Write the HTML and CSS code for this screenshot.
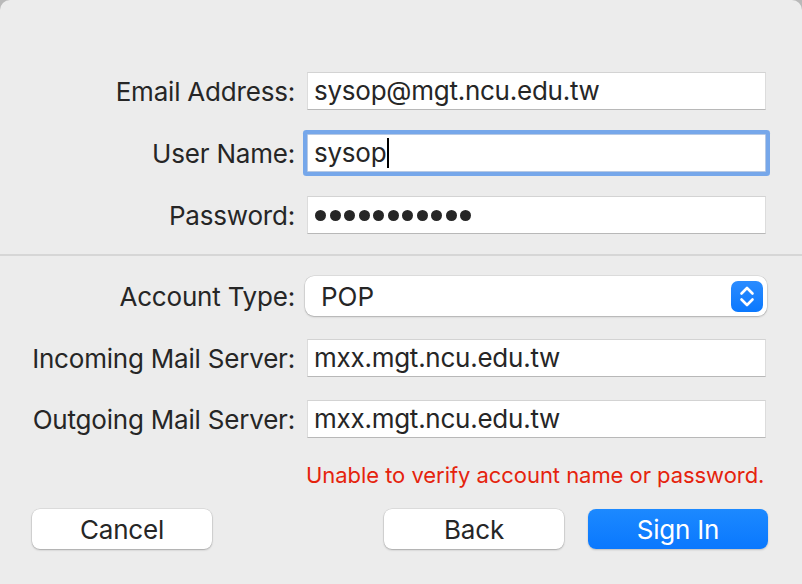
FILE: index.html
```html
<!DOCTYPE html>
<html>
<head>
<meta charset="utf-8">
<link rel="stylesheet" href="styles.css">
</head>
<body>
<div class="window">
  <div class="section">
    <div class="row">
      <div class="label">Email Address:</div>
      <div class="field">sysop@mgt.ncu.edu.tw</div>
    </div>
    <div class="row">
      <div class="label">User Name:</div>
      <div class="field focused">sysop<span class="caret"></span></div>
    </div>
    <div class="row">
      <div class="label">Password:</div>
      <div class="field dots"><span class="dot"></span><span class="dot"></span><span class="dot"></span><span class="dot"></span><span class="dot"></span><span class="dot"></span><span class="dot"></span><span class="dot"></span><span class="dot"></span><span class="dot"></span><span class="dot"></span></div>
    </div>
  </div>
  <div class="separator"></div>
  <div class="section lower">
    <div class="row popup-row">
      <div class="label">Account Type:</div>
      <div class="popup">
        <span class="popup-text">POP</span>
        <span class="stepper">
          <svg width="32" height="31" viewBox="0 0 32 31"><path d="M10.5 12.5 L16 7 L21.5 12.5 M10.5 18.5 L16 24 L21.5 18.5" fill="none" stroke="#fff" stroke-width="2.6" stroke-linecap="round" stroke-linejoin="round"/></svg>
        </span>
      </div>
    </div>
    <div class="row">
      <div class="label">Incoming Mail Server:</div>
      <div class="field">mxx.mgt.ncu.edu.tw</div>
    </div>
    <div class="row">
      <div class="label">Outgoing Mail Server:</div>
      <div class="field">mxx.mgt.ncu.edu.tw</div>
    </div>
  </div>
  <div class="error">Unable to verify account name or password.</div>
  <div class="buttons">
    <button class="btn cancel">Cancel</button>
    <div class="right-buttons">
      <button class="btn">Back</button>
      <button class="btn primary">Sign In</button>
    </div>
  </div>
</div>
</body>
</html>
```

FILE: styles.css
```css
html, body {
  margin: 0;
  padding: 0;
  background: #b9b9b9;
}
body {
  width: 802px;
  height: 584px;
  overflow: hidden;
  font-family: Inter, "Liberation Sans", sans-serif;
  color: #262626;
}
.window {
  width: 802px;
  height: 584px;
  background: #ececec;
  border-radius: 10px 10px 0 0;
  box-sizing: border-box;
  padding-top: 72px;
}
.section {
  display: flex;
  flex-direction: column;
  gap: 24px;
}
.section.lower {
  gap: 23px;
}
.row {
  display: flex;
  align-items: center;
  height: 38px;
}
.popup-row {
  height: 40px;
}
.label {
  width: 295px;
  text-align: right;
  font-size: 26px;
  letter-spacing: -0.2px;
  box-sizing: border-box;
  flex: none;
}
.field {
  width: 459px;
  height: 38px;
  margin-left: 12px;
  background: #fff;
  box-sizing: border-box;
  border-top: 1px solid #d3d3d3;
  border-left: 1px solid #dcdcdc;
  border-right: 1px solid #dcdcdc;
  border-bottom: 1px solid #b8b8b8;
  padding-left: 6px;
  font-size: 26px;
  letter-spacing: -0.25px;
  line-height: 36px;
  display: flex;
  align-items: center;
}
.focused {
  border: 1px solid #b7c9e4;
  box-shadow: 0 0 0 4px #76a7ea;
  border-radius: 1px;
}
.caret {
  display: inline-block;
  width: 2px;
  height: 30px;
  background: #000;
  margin-left: 1px;
}
.dots {
  gap: 3.5px;
  padding-left: 7px;
}
.dot {
  width: 11px;
  height: 11px;
  border-radius: 50%;
  background: #262626;
  flex: none;
}
.separator {
  height: 2px;
  background: #d6d6d6;
  margin: 20px 0 20px;
}
.popup {
  margin-left: 10px;
  width: 462px;
  height: 40px;
  background: #fff;
  border-radius: 9px;
  box-shadow: 0 0 0 0.5px rgba(0,0,0,0.12), 0 1px 2px rgba(0,0,0,0.22);
  display: flex;
  align-items: center;
  justify-content: space-between;
  box-sizing: border-box;
  padding: 0 4px 0 16px;
  font-size: 26px;
}
.stepper {
  width: 32px;
  height: 31px;
  border-radius: 7px;
  background: linear-gradient(#2b8cff, #0a78fe);
  display: flex;
}
.error {
  margin-top: 24px;
  padding-left: 306px;
  font-size: 22px;
  line-height: 26px;
  color: #e5230d;
  letter-spacing: -0.05px;
}
.buttons {
  margin-top: 21px;
  display: flex;
  justify-content: space-between;
  padding: 0 34px 0 32px;
}
.right-buttons {
  display: flex;
  gap: 24px;
}
.btn {
  width: 180px;
  height: 40px;
  border: none;
  border-radius: 8px;
  background: #fff;
  box-shadow: 0 0 0 0.5px rgba(0,0,0,0.12), 0 1px 2px rgba(0,0,0,0.25);
  font-family: Inter, "Liberation Sans", sans-serif;
  font-size: 26px;
  letter-spacing: -0.2px;
  color: #262626;
  padding: 0;
}
.primary {
  background: linear-gradient(#1c89ff, #0a78fe);
  color: #fff;
  box-shadow: 0 1px 2px rgba(0,0,0,0.2);
}
```
